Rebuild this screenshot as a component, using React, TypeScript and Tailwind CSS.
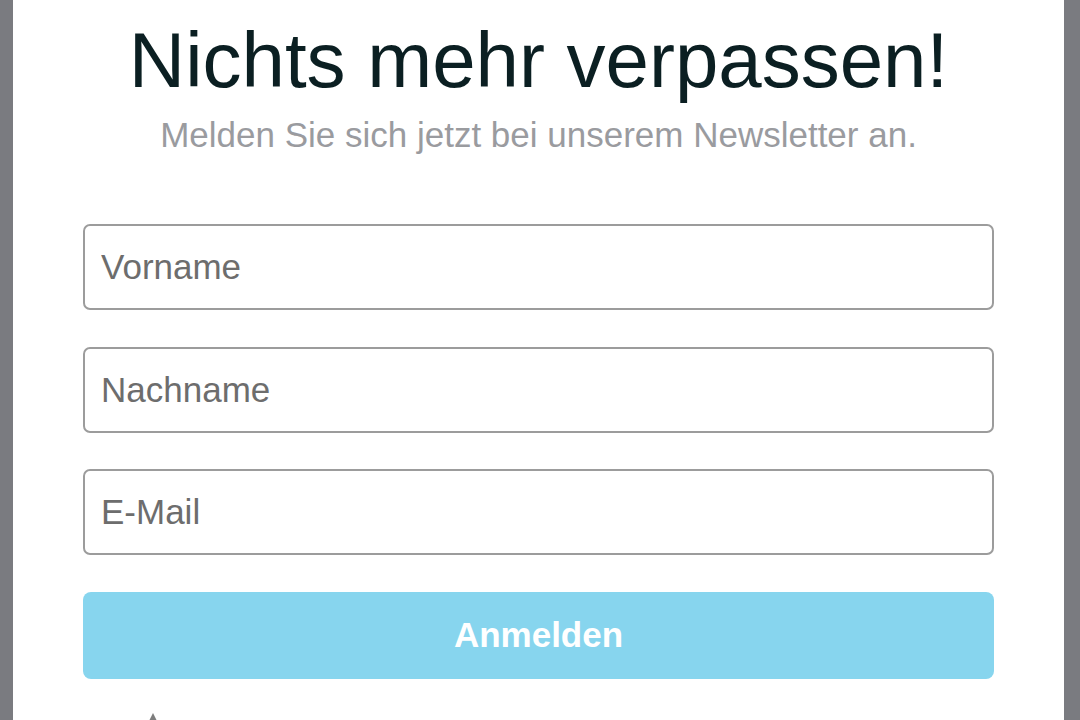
export default function App() {
  const fields = ["Vorname", "Nachname", "E-Mail"];

  return (
    <div
      className="flex h-[720px] w-full overflow-hidden bg-[#7a7b80] pl-[13px] pr-[16px]"
      style={{ fontFamily: '"Liberation Sans", Arial, sans-serif' }}
    >
      <div className="flex flex-1 flex-col bg-white px-[70px] pt-[21px]">
        {/* Heading */}
        <h1 className="text-center text-[78px] leading-[78px] text-[#0b1f22]">
          Nichts mehr verpassen!
        </h1>
        <p className="mt-[18px] text-center text-[35px] leading-[35px] text-[#9a9b9f]">
          Melden Sie sich jetzt bei unserem Newsletter an.
        </p>

        {/* Form */}
        <form className="mt-[72px] flex flex-col gap-[36.5px]" onSubmit={(e) => e.preventDefault()}>
          {fields.map((f) => (
            <input
              key={f}
              type="text"
              placeholder={f}
              className="h-[86px] w-full rounded-[7px] border-2 border-[#9c9c9c] bg-white px-[16px] text-[35px] text-[#333] outline-none placeholder:text-[#6d6d6d]"
            />
          ))}
          <button
            type="submit"
            className="h-[87px] w-full rounded-lg bg-[#87d5ee] text-[35px] font-bold text-white"
          >
            Anmelden
          </button>
        </form>

        {/* partially visible row below */}
        <div className="mt-[33px] flex pl-[65px]">
          <svg width="10" height="10" viewBox="0 0 10 10">
            <path d="M5 1 L9 9 L1 9 Z" fill="#7d7d7d" />
          </svg>
        </div>
      </div>
    </div>
  );
}
